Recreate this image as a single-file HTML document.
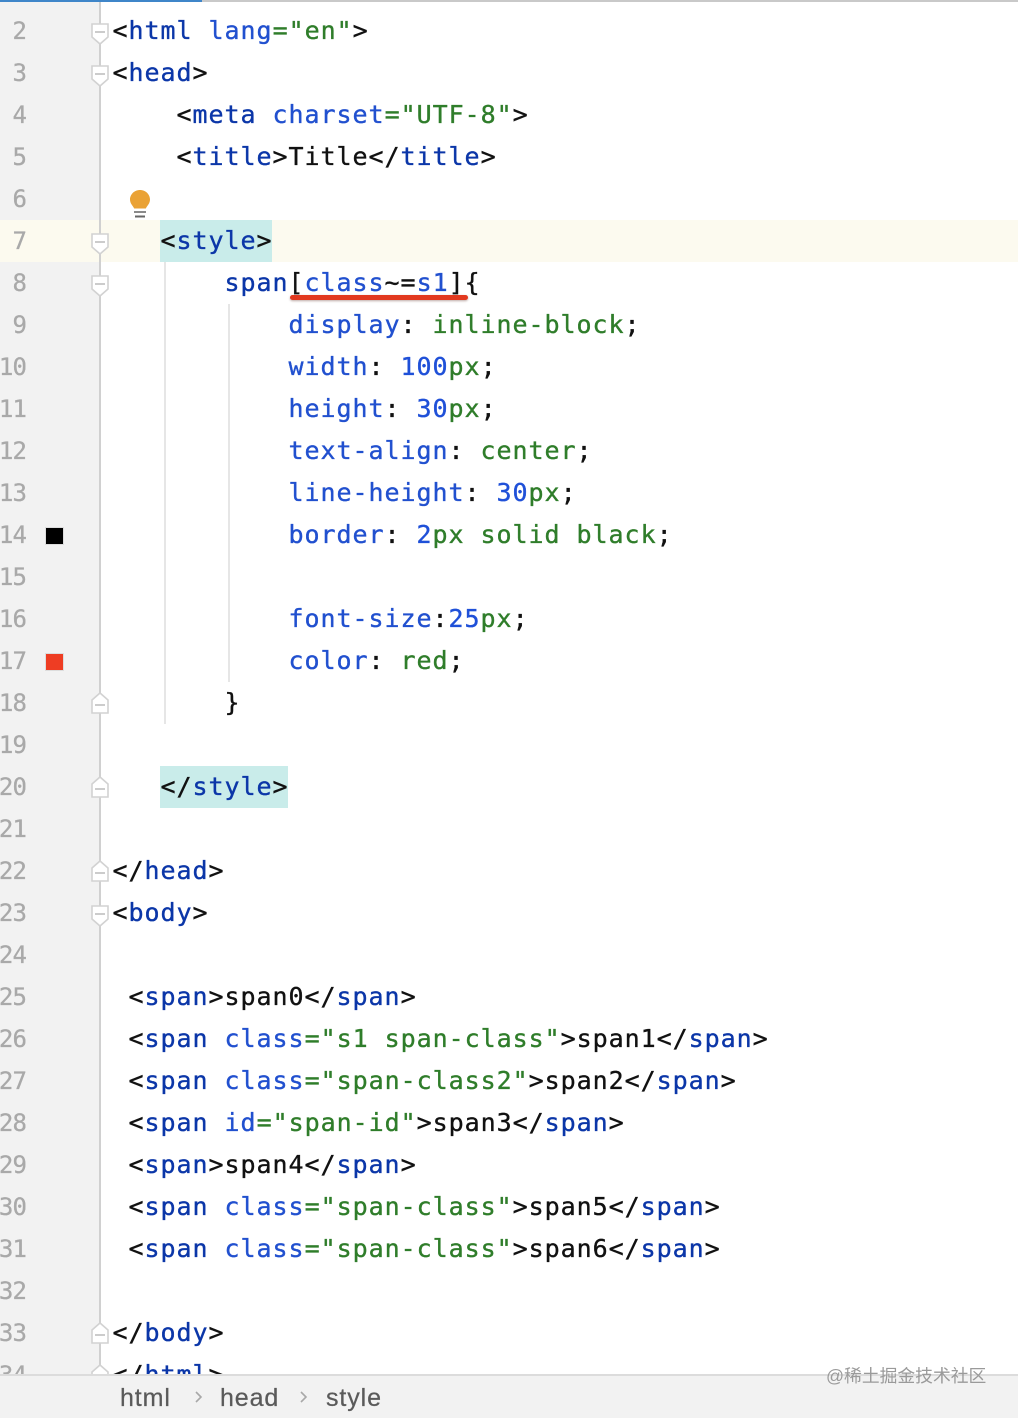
<!DOCTYPE html>
<html lang="en"><head><meta charset="utf-8"><title>Editor</title>
<style>
html,body{margin:0;padding:0;background:#fff}
#r{position:relative;width:1018px;height:1418px;overflow:hidden;background:#fff}
.abs{position:absolute}
.l{position:absolute;left:112px;height:42px;line-height:42px;white-space:pre;font-family:"DejaVu Sans Mono","Liberation Mono",monospace;font-size:25px;letter-spacing:.95px;color:#111;-webkit-text-stroke:.35px currentColor;transform:translateX(.5px)}
.n{position:absolute;right:992px;height:42px;line-height:42px;font-family:"DejaVu Sans Mono","Liberation Mono",monospace;font-size:24px;letter-spacing:-.9px;color:#a9a9a9;white-space:pre;-webkit-text-stroke:.3px currentColor}
i{font-style:normal}
.t{color:#0b36a8}.a{color:#2150cf}.s{color:#2f7d2a}.b{color:#1f50d8}
.f{position:absolute;left:90px;width:20px;height:24px}
.c{position:absolute;top:1382px;height:32px;line-height:32px;font-family:'Liberation Sans',sans-serif;font-size:25px;letter-spacing:.9px;color:#5a5a5a;-webkit-text-stroke:.25px currentColor}
</style></head><body><div id="r">
<div class="abs" style="left:0;top:0;width:1018px;height:2px;background:#c9c9c9"></div>
<div class="abs" style="left:0;top:0;width:202px;height:2px;background:#3f86c9"></div>
<div class="abs" style="left:0;top:2px;width:99px;height:1372px;background:#f2f2f2"></div>
<div class="abs" style="left:0;top:220px;width:1018px;height:42px;background:#fcfaef"></div>
<div class="abs" style="left:99px;top:2px;width:2px;height:1372px;background:#d0d0d0"></div>
<div class="abs" style="left:160px;top:220px;width:112px;height:42px;background:#c9ecea"></div>
<div class="abs" style="left:160px;top:766px;width:128px;height:42px;background:#c9ecea"></div>
<div class="abs" style="left:164px;top:262px;width:2px;height:462px;background:#e6e6e6"></div>
<div class="abs" style="left:228px;top:304px;width:2px;height:378px;background:#e6e6e6"></div>

<span class="n" style="top:10px">2</span><span class="n" style="top:52px">3</span><span class="n" style="top:94px">4</span><span class="n" style="top:136px">5</span><span class="n" style="top:178px">6</span><span class="n" style="top:220px">7</span><span class="n" style="top:262px">8</span><span class="n" style="top:304px">9</span><span class="n" style="top:346px">10</span><span class="n" style="top:388px">11</span><span class="n" style="top:430px">12</span><span class="n" style="top:472px">13</span><span class="n" style="top:514px">14</span><span class="n" style="top:556px">15</span><span class="n" style="top:598px">16</span><span class="n" style="top:640px">17</span><span class="n" style="top:682px">18</span><span class="n" style="top:724px">19</span><span class="n" style="top:766px">20</span><span class="n" style="top:808px">21</span><span class="n" style="top:850px">22</span><span class="n" style="top:892px">23</span><span class="n" style="top:934px">24</span><span class="n" style="top:976px">25</span><span class="n" style="top:1018px">26</span><span class="n" style="top:1060px">27</span><span class="n" style="top:1102px">28</span><span class="n" style="top:1144px">29</span><span class="n" style="top:1186px">30</span><span class="n" style="top:1228px">31</span><span class="n" style="top:1270px">32</span><span class="n" style="top:1312px">33</span><span class="n" style="top:1354px">34</span>

<svg class="f" style="top:22px" viewBox="0 0 20 24"><path d="M2 2H18V15L10 22L2 15Z" fill="#fff" stroke="#d2d2d2" stroke-width="1.6"/><path d="M5 10H15" stroke="#c0c0c0" stroke-width="1.6"/></svg>
<svg class="f" style="top:64px" viewBox="0 0 20 24"><path d="M2 2H18V15L10 22L2 15Z" fill="#fff" stroke="#d2d2d2" stroke-width="1.6"/><path d="M5 10H15" stroke="#c0c0c0" stroke-width="1.6"/></svg>
<svg class="f" style="top:232px" viewBox="0 0 20 24"><path d="M2 2H18V15L10 22L2 15Z" fill="#fff" stroke="#d2d2d2" stroke-width="1.6"/><path d="M5 10H15" stroke="#c0c0c0" stroke-width="1.6"/></svg>
<svg class="f" style="top:274px" viewBox="0 0 20 24"><path d="M2 2H18V15L10 22L2 15Z" fill="#fff" stroke="#d2d2d2" stroke-width="1.6"/><path d="M5 10H15" stroke="#c0c0c0" stroke-width="1.6"/></svg>
<svg class="f" style="top:904px" viewBox="0 0 20 24"><path d="M2 2H18V15L10 22L2 15Z" fill="#fff" stroke="#d2d2d2" stroke-width="1.6"/><path d="M5 10H15" stroke="#c0c0c0" stroke-width="1.6"/></svg>
<svg class="f" style="top:691px" viewBox="0 0 20 24"><path d="M2 22H18V9L10 2L2 9Z" fill="#fff" stroke="#d2d2d2" stroke-width="1.6"/><path d="M5 14H15" stroke="#c0c0c0" stroke-width="1.6"/></svg>
<svg class="f" style="top:775px" viewBox="0 0 20 24"><path d="M2 22H18V9L10 2L2 9Z" fill="#fff" stroke="#d2d2d2" stroke-width="1.6"/><path d="M5 14H15" stroke="#c0c0c0" stroke-width="1.6"/></svg>
<svg class="f" style="top:859px" viewBox="0 0 20 24"><path d="M2 22H18V9L10 2L2 9Z" fill="#fff" stroke="#d2d2d2" stroke-width="1.6"/><path d="M5 14H15" stroke="#c0c0c0" stroke-width="1.6"/></svg>
<svg class="f" style="top:1321px" viewBox="0 0 20 24"><path d="M2 22H18V9L10 2L2 9Z" fill="#fff" stroke="#d2d2d2" stroke-width="1.6"/><path d="M5 14H15" stroke="#c0c0c0" stroke-width="1.6"/></svg>
<svg class="f" style="top:1363px" viewBox="0 0 20 24"><path d="M2 22H18V9L10 2L2 9Z" fill="#fff" stroke="#d2d2d2" stroke-width="1.6"/><path d="M5 14H15" stroke="#c0c0c0" stroke-width="1.6"/></svg>

<svg class="abs" style="left:128px;top:188px" width="24" height="32" viewBox="0 0 24 32"><path d="M12 2C6.500 2 2 6.300 2 11.500C2 15.500 4.700 17.500 6.200 20.500H17.800C19.300 17.500 22 15.500 22 11.500C22 6.300 17.500 2 12 2Z" fill="#eaa235"/><path d="M6 24H18" stroke="#8a8a8a" stroke-width="2"/><path d="M7 28.500H17" stroke="#666" stroke-width="2"/></svg>
<div class="abs" style="left:46px;top:528px;width:17px;height:16px;background:#000;box-shadow:0 0 0 1px #ddd"></div>
<div class="abs" style="left:46px;top:654px;width:17px;height:16px;background:#ee3d23;box-shadow:0 0 0 1px #ddd"></div>

<div class="l" style="top:10px">&lt;<i class="t">html</i> <i class="a">lang</i><i class="s">="en"</i>&gt;</div>
<div class="l" style="top:52px">&lt;<i class="t">head</i>&gt;</div>
<div class="l" style="top:94px">    &lt;<i class="t">meta</i> <i class="a">charset</i><i class="s">="UTF-8"</i>&gt;</div>
<div class="l" style="top:136px">    &lt;<i class="t">title</i>&gt;Title&lt;/<i class="t">title</i>&gt;</div>
<div class="l" style="top:220px;left:160px">&lt;<i class="t">style</i>&gt;</div>
<div class="l" style="top:262px;left:224px"><i class="t">span</i>[<i class="a">class</i>~=<i class="a">s1</i>]{</div>
<div class="l" style="top:304px;left:288px"><i class="a">display</i>: <i class="s">inline-block</i>;</div>
<div class="l" style="top:346px;left:288px"><i class="a">width</i>: <i class="b">100</i><i class="s">px</i>;</div>
<div class="l" style="top:388px;left:288px"><i class="a">height</i>: <i class="b">30</i><i class="s">px</i>;</div>
<div class="l" style="top:430px;left:288px"><i class="a">text-align</i>: <i class="s">center</i>;</div>
<div class="l" style="top:472px;left:288px"><i class="a">line-height</i>: <i class="b">30</i><i class="s">px</i>;</div>
<div class="l" style="top:514px;left:288px"><i class="a">border</i>: <i class="b">2</i><i class="s">px solid black</i>;</div>
<div class="l" style="top:598px;left:288px"><i class="a">font-size</i>:<i class="b">25</i><i class="s">px</i>;</div>
<div class="l" style="top:640px;left:288px"><i class="a">color</i>: <i class="s">red</i>;</div>
<div class="l" style="top:682px;left:224px">}</div>
<div class="l" style="top:766px;left:160px">&lt;/<i class="t">style</i>&gt;</div>
<div class="l" style="top:850px">&lt;/<i class="t">head</i>&gt;</div>
<div class="l" style="top:892px">&lt;<i class="t">body</i>&gt;</div>
<div class="l" style="top:976px"> &lt;<i class="t">span</i>&gt;span0&lt;/<i class="t">span</i>&gt;</div>
<div class="l" style="top:1018px"> &lt;<i class="t">span</i> <i class="a">class</i><i class="s">="s1 span-class"</i>&gt;span1&lt;/<i class="t">span</i>&gt;</div>
<div class="l" style="top:1060px"> &lt;<i class="t">span</i> <i class="a">class</i><i class="s">="span-class2"</i>&gt;span2&lt;/<i class="t">span</i>&gt;</div>
<div class="l" style="top:1102px"> &lt;<i class="t">span</i> <i class="a">id</i><i class="s">="span-id"</i>&gt;span3&lt;/<i class="t">span</i>&gt;</div>
<div class="l" style="top:1144px"> &lt;<i class="t">span</i>&gt;span4&lt;/<i class="t">span</i>&gt;</div>
<div class="l" style="top:1186px"> &lt;<i class="t">span</i> <i class="a">class</i><i class="s">="span-class"</i>&gt;span5&lt;/<i class="t">span</i>&gt;</div>
<div class="l" style="top:1228px"> &lt;<i class="t">span</i> <i class="a">class</i><i class="s">="span-class"</i>&gt;span6&lt;/<i class="t">span</i>&gt;</div>
<div class="l" style="top:1312px">&lt;/<i class="t">body</i>&gt;</div>
<div class="l" style="top:1354px">&lt;/<i class="t">html</i>&gt;</div>

<div class="abs" style="left:290px;top:295px;width:178px;height:5px;border-radius:3px;background:#e2391f;box-shadow:0 1px 2px rgba(90,40,30,.4)"></div>

<div class="abs" style="left:0;top:1374px;width:1018px;height:44px;background:#f2f2f2;border-top:2px solid #dcdcdc;box-sizing:border-box"></div>
<div class="c" style="left:120px">html</div>
<div class="c" style="left:220px">head</div>
<div class="c" style="left:326px">style</div>
<svg class="abs" style="left:194px;top:1390px" width="10" height="14" viewBox="0 0 10 14"><path d="M2 2L7 7L2 12" fill="none" stroke="#a8a8a8" stroke-width="1.6"/></svg>
<svg class="abs" style="left:299px;top:1390px" width="10" height="14" viewBox="0 0 10 14"><path d="M2 2L7 7L2 12" fill="none" stroke="#a8a8a8" stroke-width="1.6"/></svg>
<div class="abs" style="left:826px;top:1364px;height:24px;line-height:24px;white-space:nowrap;font-family:'Liberation Sans','Noto Sans CJK SC',sans-serif;font-size:17.800px;color:#9a9a9a">@稀土掘金技术社区</div>
</div></body></html>
